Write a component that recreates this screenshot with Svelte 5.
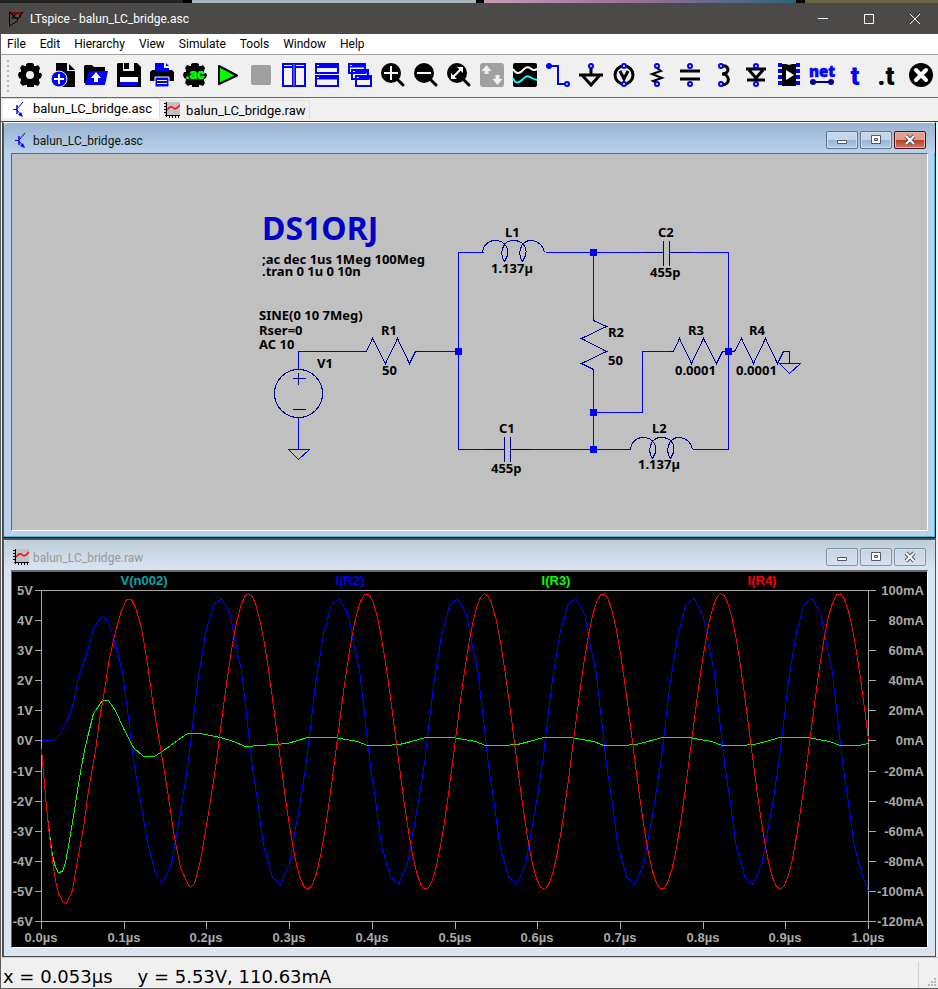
<script>
    const title = "LTspice - balun_LC_bridge.asc";
    const menus = ["File", "Edit", "Hierarchy", "View", "Simulate", "Tools", "Window", "Help"];

    const tools = [
        "Settings", "New schematic", "Open", "Save", "Print", "Configure analysis", "Run", "Stop",
        "Tile vertically", "Tile horizontally", "Cascade", "Zoom in", "Zoom out", "Zoom to fit",
        "Autorange", "Pick visible traces", "Wire", "Ground", "Voltage source", "Resistor",
        "Capacitor", "Inductor", "Diode", "Component", "Net name", "Text", "SPICE directive", "Delete",
    ];

    let activeTab = $state("asc");

    // schematic labels: x, baseline y, text
    const labels = [
        [262, 264, ";ac dec 1us 1Meg 100Meg"],
        [262, 276, ".tran 0 1u 0 10n"],
        [259, 320, "SINE(0 10 7Meg)"],
        [259, 335, "Rser=0"],
        [259, 349, "AC 10"],
        [381, 335, "R1"],
        [382, 375, "50"],
        [317, 368, "V1"],
        [505, 237, "L1"],
        [491, 273, "1.137µ"],
        [608, 337, "R2"],
        [608, 365, "50"],
        [499, 433, "C1"],
        [491, 473, "455p"],
        [658, 237, "C2"],
        [650, 277, "455p"],
        [688, 335, "R3"],
        [675, 375, "0.0001"],
        [749, 335, "R4"],
        [736, 375, "0.0001"],
        [652, 433, "L2"],
        [638, 469, "1.137µ"],
    ];
    const nodes = [[458, 351], [593, 252], [593, 412], [593, 449], [728, 351]];

    // plot area
    const left = 41;
    const right = 868;
    const top = 590;
    const bottom = 921;
    const zero = 741;
    const period = (right - left) / 7;

    const rows = Array.from({ length: 12 }, (_, i) => ({
        y: Math.round(top + ((bottom - top) * i) / 11),
        volts: `${5 - i}V`,
        amps: `${100 - i * 20}mA`,
    }));
    const cols = Array.from({ length: 11 }, (_, i) => ({
        x: Math.round(left + ((right - left) * i) / 10),
        time: `${(i / 10).toFixed(1)}µs`,
    }));
    const legend = [
        { x: 144, text: "V(n002)", color: "#00a8a8" },
        { x: 350, text: "I(R2)", color: "#0000e8" },
        { x: 556, text: "I(R3)", color: "#00ff00" },
        { x: 762, text: "I(R4)", color: "#ff0000" },
    ];

    function repeat(start, cycle, count) {
        const points = [...start];
        for (let k = 0; k < count; k++) {
            for (const [x, y] of cycle) points.push([x + k * period, y]);
        }
        return points.filter((p) => p[0] <= right);
    }

    const r2 = repeat(
        [
            [41, 740], [52, 740], [58, 736], [67, 720], [73, 702], [78, 677], [87, 650], [93, 628],
            [102, 615], [108, 622], [114, 640], [122, 672], [128, 717], [133, 760], [137, 783],
            [147, 842], [155, 873], [162, 882], [171, 863], [175, 840], [182, 800],
        ],
        [
            [188, 760], [197, 683], [205, 633], [213, 604], [221, 598], [230, 615], [235, 643],
            [241, 670], [247, 723], [252, 767], [257, 800], [263, 845], [272, 877], [280, 884],
            [289, 863], [293, 840], [300, 800],
        ],
        6
    );
    r2.push([868, 891]);

    const r3 = repeat(
        [
            [41, 749], [44, 783], [46, 807], [49, 833], [52, 855], [55, 867], [58, 872], [62, 871],
            [65, 862], [69, 840], [74, 810], [79, 777], [84, 750], [87, 737], [93, 713], [102, 700],
            [108, 700], [115, 710], [123, 728], [133, 747], [143, 756], [154, 756], [163, 750],
            [177, 740], [187, 733], [200, 733], [220, 737], [233, 741], [245, 746], [260, 745],
            [287, 743],
        ],
        [
            [307, 737], [335, 737], [345, 739], [357, 741], [367, 745], [385, 745], [399, 744], [411, 741],
        ],
        5
    );
    r3.push([868, 743]);

    const r4 = [
        [41, 749], [44, 783], [46, 807], [49, 835], [52, 860], [55, 880], [58, 893], [63, 902],
        [66, 903], [72, 890], [77, 860], [83, 827], [88, 790], [95, 750], [100, 713], [105, 684],
        [108, 663], [114, 635], [121, 610], [126, 599], [131, 599], [135, 607], [141, 627],
        [147, 663], [153, 707], [161, 753], [167, 790], [174, 837], [180, 867], [187, 883],
        [190, 887], [194, 883], [200, 860], [208, 813],
    ];
    for (let x = 216; x <= right; x += 4) {
        r4.push([x, zero - 148 * Math.cos((2 * Math.PI * (x - 248)) / period)]);
    }

    const line = (points) => points.map(([x, y]) => `${x.toFixed(1)},${y.toFixed(1)}`).join(" ");
</script>

{#snippet transistor()}
    <svg class="doc-icon" viewBox="0 0 16 16" fill="none" stroke="#00f" aria-hidden="true">
        <path d="M2 8.500h4M6 8l6-7M6 9l5 6" />
        <path d="M6 4v9" stroke-width="1.500" />
        <path d="M12 16l-5-2 3-3z" fill="#00f" stroke="none" />
    </svg>
{/snippet}

{#snippet waveform()}
    <svg class="doc-icon" viewBox="0 0 16 16" fill="none" aria-hidden="true">
        <rect x="1" width="15" height="14" fill="#c0c0c0" />
        <path d="M2.500 0v15M1 13.500h15" stroke="#000" />
        <path d="M0 1.500h2M0 4.500h2M0 7.500h2M0 10.500h2M5.500 14v2M8.500 14v2M11.500 14v2M14.500 14v2" stroke="#000" />
        <path d="M3 8l3-3h2l3 2 2-1 3-3" stroke="#f00" stroke-width="1.500" />
    </svg>
{/snippet}

{#snippet gear()}
    <path d="M10 0h4l2 1v2h2l2-1 2 3-1 3v2h2l1 2-1 3-2 1v2l1 2-2 3-3-1h-1v2H9v-2H7l-2 1-3-3 1-3v-1l-2-1-1-3 1-3h2V7L2 5l2-3 3 1h1V1z" fill="#000" />
{/snippet}

{#snippet magnifier()}
    <circle cx="10" cy="10" r="10" fill="#000" />
    <path d="M16 16l6 6" stroke="#000" stroke-width="3" stroke-linecap="round" />
{/snippet}

{#snippet pin(cx, cy)}
    <circle {cx} {cy} r="2" fill="#f0f0f0" stroke="#00f" stroke-width="2" />
{/snippet}

{#snippet toolIcon(name)}
    {#if name === "Settings"}
        {@render gear()}
        <circle cx="12" cy="12" r="4" fill="#f0f0f0" />
    {:else if name === "New schematic"}
        <path d="M5 0h11v8h8v16H5z" fill="#000" />
        <path d="M18 1l6 6h-6z" fill="#000" />
        <circle cx="8" cy="16" r="8" fill="#00f" stroke="#f0f0f0" />
        <path d="M8 11v10M3 16h10" stroke="#fff" stroke-width="2" />
    {:else if name === "Open"}
        <path d="M1 2h7l2 2h11v4H6L2 20H0V3z" fill="#000" />
        <path d="M5 8h19l-3 14H1z" fill="#00f" />
        <path d="M12 9l5 6h-3v4h-4v-4H7z" fill="#fff" />
    {:else if name === "Save"}
        <path d="M1 0h19l4 4v20H0V1z" fill="#000" />
        <path d="M6 0h11v8H6z" fill="#f0f0f0" />
        <path d="M7 0h5v6H7z" fill="#000" />
        <path d="M3 14h18v9H3z" fill="#fff" />
        <path d="M3 19h18v4H3z" fill="#00f" />
    {:else if name === "Print"}
        <path d="M5 0h9v5h5v4H5z" fill="#00f" />
        <path d="M16 0l3 3h-3z" fill="#00f" />
        <path d="M2 7h3v1h14V7h3l2 2v9H0V9z" fill="#000" />
        <path d="M5 14h14v10H5z" fill="#00f" stroke="#fff" />
        <path d="M7 17.500h10M7 20.500h10" stroke="#fff" />
    {:else if name === "Configure analysis"}
        {@render gear()}
        <text x="12" y="16" class="ac">.ac</text>
    {:else if name === "Run"}
        <path d="M3 3l18 9.500L3 21z" fill="#0f0" stroke="#000" stroke-width="2" stroke-linejoin="round" />
    {:else if name === "Stop"}
        <rect x="2" y="2" width="20" height="20" rx="2" fill="#a0a0a0" />
    {:else if name === "Tile vertically"}
        <path d="M1 1h10v22H1zM13 1h10v22H13z" fill="#f4f4f4" stroke="#00f" stroke-width="2" />
        <path d="M2 4h20" stroke="#00f" stroke-width="2" />
        <path d="M3 2.500h3M15 2.500h3" stroke="#fff" />
        <path d="M12 1v22" stroke="#a0a0a0" />
    {:else if name === "Tile horizontally"}
        <path d="M1 1h22v9H1zM1 13h22v10H1z" fill="#f4f4f4" stroke="#00f" stroke-width="2" />
        <path d="M1 3.500h22M1 15h22" stroke="#00f" stroke-width="3" />
        <path d="M2 2.500h2M2 14.500h2" stroke="#fff" />
    {:else if name === "Cascade"}
        <path d="M1 1h16v9H1zM4 7h16v9H4zM8 13h15v10H8z" fill="#f4f4f4" stroke="#00f" stroke-width="2" />
        <path d="M1 3h16M4 9h16M8 15h15" stroke="#00f" stroke-width="3" />
        <path d="M2 2.500h2M5 8.500h2M9 14.500h2" stroke="#fff" />
    {:else if name === "Zoom in"}
        {@render magnifier()}
        <path d="M10 3v14M3 10h14" stroke="#fff" stroke-width="2" />
    {:else if name === "Zoom out"}
        {@render magnifier()}
        <path d="M3 10h14" stroke="#fff" stroke-width="2" />
    {:else if name === "Zoom to fit"}
        {@render magnifier()}
        <path d="M6 14l9-9" stroke="#fff" stroke-width="2" />
        <path d="M10 4h6v6zM4 10l6 6H4z" fill="#fff" />
    {:else if name === "Autorange"}
        <rect width="24" height="24" rx="3" fill="#a0a0a0" />
        <path d="M6.500 2l5 6h-3v3h-4V8h-3zM17.500 22l5-6h-3v-4h-4v4h-3z" fill="#f0f0f0" />
    {:else if name === "Pick visible traces"}
        <rect width="24" height="24" rx="2" fill="#000" />
        <path d="M0 6c3 5 6 5 9 2s5-5 8-3 3 3 7 1" fill="none" stroke="#fff" stroke-width="2" />
        <path d="M0 15c2 6 6 5 9 2s5-5 8-3 3 2 7 3" fill="none" stroke="#0ff" stroke-width="2" />
    {:else if name === "Wire"}
        <path d="M2 3h10v18h9" fill="none" stroke="#00f" stroke-width="2" />
        <circle cx="3" cy="3" r="3" fill="#00f" />
        {@render pin(21, 21)}
    {:else if name === "Ground"}
        <path d="M12 5v7M0 12h24M3 12l9 10 9-10" fill="none" stroke="#000" stroke-width="3" />
        {@render pin(12, 3)}
    {:else if name === "Voltage source"}
        <circle cx="12" cy="12" r="9" fill="none" stroke="#000" stroke-width="3" />
        <path d="M8 8l4 8 4-8" fill="none" stroke="#000" stroke-width="3" />
        {@render pin(12, 3)}
        {@render pin(12, 21)}
    {:else if name === "Resistor"}
        <path d="M12 5l4 3-9 3 10 4-9 3 4 2" fill="none" stroke="#000" stroke-width="2" />
        {@render pin(12, 3)}
        {@render pin(12, 21)}
    {:else if name === "Capacitor"}
        <path d="M2 8h20M2 16h20" stroke="#000" stroke-width="3" />
        <path d="M12 4v3M12 17v3" stroke="#808080" />
        {@render pin(12, 3)}
        {@render pin(12, 21)}
    {:else if name === "Inductor"}
        <path d="M11 3c7-2 9 8 0 8 8 0 9 11 0 11" fill="none" stroke="#000" stroke-width="3" />
        {@render pin(10, 3)}
        {@render pin(10, 21)}
    {:else if name === "Diode"}
        <path d="M2 6h20M5 7l7 8 7-8M3 17h18" fill="none" stroke="#000" stroke-width="3" />
        {@render pin(12, 3)}
        {@render pin(12, 21)}
    {:else if name === "Component"}
        <path d="M3 0v24M21 0v24" stroke="#00f" stroke-width="4" stroke-dasharray="4 2" />
        <path d="M5 1h4l3 1 3-1h4v22H5z" fill="#000" />
        <path d="M9 7l8 5-8 5z" fill="#fff" />
    {:else if name === "Net name"}
        <text x="12" y="14" class="net">net</text>
        <path d="M3 19h18" stroke="#000090" stroke-width="2" />
        <circle cx="3" cy="19" r="3" fill="#000090" />
        <circle cx="21" cy="19" r="3" fill="#000090" />
    {:else if name === "Text"}
        <text x="12" y="22" class="tee" fill="#00f">t</text>
    {:else if name === "SPICE directive"}
        <text x="10" y="22" class="tee">.t</text>
    {:else}
        <circle cx="12" cy="12" r="12" fill="#000" />
        <path d="M7 7l10 10M17 7L7 17" stroke="#fff" stroke-width="4" stroke-linecap="round" />
    {/if}
{/snippet}

{#snippet childButtons()}
    <div class="child-buttons">
        <button type="button" aria-label="Minimize window">
            <svg viewBox="0 0 14 12"><path d="M2.500 6.500h9v3h-9z" fill="#fff" stroke="#535666" /></svg>
        </button>
        <button type="button" aria-label="Maximize window">
            <svg viewBox="0 0 14 12">
                <path d="M2.500 1.500h9v8h-9z" fill="#fff" stroke="#535666" />
                <path d="M5.500 4.500h3v2h-3z" fill="#b9d1ea" stroke="#535666" />
            </svg>
        </button>
        <button type="button" class="child-close" aria-label="Close window">
            <svg viewBox="0 0 14 12">
                <path d="M3 2l8 8M11 2l-8 8" stroke="#535666" stroke-width="4" />
                <path d="M3 2l8 8M11 2l-8 8" stroke="#fff" stroke-width="2" />
            </svg>
        </button>
    </div>
{/snippet}

<div class="desktop"></div>
<div class="app">
    <header class="titlebar">
        <svg class="logo" viewBox="0 0 16 16" aria-hidden="true">
            <path d="M1.500 0.500V15l8-5V7" fill="none" stroke="#000" />
            <path d="M2 1h6L6 7 2 3zM9 1h7l-3 2v4h-2V3H9z" fill="#8c0000" />
            <path d="M2 1l7 7M9 2L4 7h6M15 1l-5 7" fill="none" stroke="#000" />
        </svg>
        <h1>{title}</h1>
        <div class="window-buttons">
            <button type="button" aria-label="Minimize">
                <svg viewBox="0 0 10 10"><path d="M0 4.500h10" /></svg>
            </button>
            <button type="button" aria-label="Maximize">
                <svg viewBox="0 0 10 10"><path d="M0.500 0.500h9v9h-9z" /></svg>
            </button>
            <button type="button" aria-label="Close">
                <svg viewBox="0 0 10 10"><path d="M0 0l10 10M10 0L0 10" /></svg>
            </button>
        </div>
    </header>

    <nav class="menubar">
        {#each menus as menu}
            <button type="button">{menu}</button>
        {/each}
    </nav>

    <div class="toolbar">
        <span class="grip"></span>
        {#each tools as tool}
            <button type="button" aria-label={tool} disabled={tool === "Stop" || tool === "Autorange"}>
                <svg viewBox="0 0 24 24">{@render toolIcon(tool)}</svg>
            </button>
        {/each}
    </div>

    <div class="tabs">
        <button type="button" class:active={activeTab === "asc"} onclick={() => (activeTab = "asc")}>
            {@render transistor()}
            balun_LC_bridge.asc
        </button>
        <button type="button" class:active={activeTab === "raw"} onclick={() => (activeTab = "raw")}>
            {@render waveform()}
            balun_LC_bridge.raw
        </button>
    </div>

    <main class="mdi">
        <section class="child focused">
            <div class="child-title">
                {@render transistor()}
                <h2>balun_LC_bridge.asc</h2>
                {@render childButtons()}
            </div>
            <div class="client">
                <svg class="schematic" viewBox="12 154 915 376">
                    <g transform="translate(0.5 0.5)" fill="none" shape-rendering="crispEdges">
                        <path
                            class="wire"
                            d="M298 369V351H366M415 351H458M483 252H458V449H483M545 252H643M691 252H728V449H692
                               M531 449H630M593 252V315M593 375V449M593 412H642V351H667M298 417V449
                               M288 449H309L298 459ZM779 363H800L789 373Z"
                        />
                        <circle cx="298" cy="393" r="24" class="part" />
                        <path class="part" d="M292 378H305M298 372V384M292 409H305" />
                        <path class="part" d="M361 351H366L372 338L385 363L397 338L409 363L415 351H421" />
                        <path class="part" d="M593 315V320L606 326L581 338L606 351L581 363L593 369V375" />
                        <path class="part" d="M667 351H673L679 338L691 363L703 338L716 363L722 351H728" />
                        <path class="part" d="M728 351H734L741 338L753 363L765 338L777 363L783 351H789V363" />
                        <path class="part" d="M483 449H504M504 436V461M510 436V461M510 449H531" />
                        <path class="part" d="M643 252H663M663 240V265M669 240V265M669 252H691" />
                        {#each [[0, 0], [148, 197]] as [dx, dy]}
                            <path
                                class="part"
                                transform="translate({dx} {dy})"
                                d="M482 252Q484 240 495 240C504 240 509 248 507 255L504 261C499 254 501 240 513 240
                                   C523 240 527 248 525 255L522 261C517 254 519 240 531 240Q542 241 544 252"
                            />
                        {/each}
                    </g>
                    {#each nodes as [x, y]}
                        <rect x={x - 3} y={y - 3} width="7" height="7" fill="#00f" />
                    {/each}
                    <text x="262" y="240" class="callsign">DS1ORJ</text>
                    {#each labels as [x, y, text]}
                        <text {x} {y}>{text}</text>
                    {/each}
                </svg>
            </div>
        </section>

        <section class="child">
            <div class="child-title">
                {@render waveform()}
                <h2>balun_LC_bridge.raw</h2>
                {@render childButtons()}
            </div>
            <div class="client plot-client">
                <svg class="plot" viewBox="12 572 915 375">
                    {#each legend as item}
                        <text x={item.x} y="585" text-anchor="middle" fill={item.color}>{item.text}</text>
                    {/each}
                    <g transform="translate(0.5 0.5)" fill="none" shape-rendering="crispEdges">
                        <path class="axis" d="M{left} {top}H{right}V{bottom}H{left}Z" />
                        {#each rows as row}
                            <path class="axis" d="M{left - 7} {row.y}H{left}M{right} {row.y}H{right + 7}" />
                        {/each}
                        {#each cols as col}
                            <path class="axis" d="M{col.x} {bottom}V{bottom + 7}" />
                        {/each}
                        <polyline points={line(r2)} stroke="#00f" />
                        <polyline points={line(r3)} stroke="#0f0" />
                        <polyline points={line(r4)} stroke="#f00" />
                    </g>
                    {#each rows as row}
                        <text x="33" y={row.y + 5} text-anchor="end">{row.volts}</text>
                        <text x="924" y={row.y + 5} text-anchor="end">{row.amps}</text>
                    {/each}
                    {#each cols as col}
                        <text x={col.x} y="942" text-anchor="middle">{col.time}</text>
                    {/each}
                </svg>
            </div>
        </section>
    </main>

    <footer class="status">
        <span>x = 0.053µs</span>
        <span class="cursor-y">y = 5.53V, 110.63mA</span>
        <svg class="size-grip" viewBox="0 0 8 8" aria-hidden="true">
            <path d="M6 0h2v2H6zM3 3h2v2H3zM6 3h2v2H6zM0 6h2v2H0zM3 6h2v2H3zM6 6h2v2H6z" fill="#b8b8b8" />
        </svg>
    </footer>
</div>

<style>
    :global(body) {
        margin: 0;
        background: #f0f0f0;
    }

    .desktop {
        height: 3px;
        background: linear-gradient(
            90deg,
            #222 0 183px,
            #000 183px 192px,
            #a9b5bd 192px 476px,
            #000 476px 484px,
            #c79bb4 484px,
            #a0709a 630px,
            #2a6478 796px,
            #000 796px 805px,
            #6a6444 805px
        );
    }

    .app {
        box-sizing: border-box;
        font-family: Roboto, "Noto Sans", sans-serif;
        font-size: 12px;
        color: #000;
        background: #f0f0f0;
        border-bottom: 1px solid #5b5b5b;
    }

    button {
        font: inherit;
        color: inherit;
        background: none;
        border: 0;
        padding: 0;
    }

    h1,
    h2 {
        margin: 0;
        font-size: 12px;
        font-weight: 400;
    }

    svg {
        display: block;
    }

    .titlebar {
        display: flex;
        align-items: center;
        height: 31px;
        padding-left: 8px;
        background: #4b4a48;
        color: #fff;
    }

    .logo {
        width: 16px;
        height: 16px;
        margin-right: 6px;
    }

    .window-buttons {
        display: flex;
        align-self: stretch;
        margin-left: auto;
    }

    .window-buttons button {
        width: 46px;
    }

    .window-buttons svg {
        width: 10px;
        height: 10px;
        margin: 0 auto;
        fill: none;
        stroke: #fff;
    }

    .menubar {
        display: flex;
        gap: 14px;
        height: 20px;
        padding-left: 6px;
        background: #fff;
        border-bottom: 1px solid #a0a0a0;
        border-left: 1px solid #5b5b5b;
    }

    .menubar button {
        height: 19px;
    }

    .toolbar {
        display: flex;
        align-items: center;
        gap: 9px;
        height: 42px;
        padding: 0 5px 0 6px;
        border-bottom: 1px solid #696969;
        border-left: 1px solid #5b5b5b;
    }

    .toolbar button {
        flex: none;
        width: 24px;
        height: 24px;
        margin-bottom: 2px;
    }

    .toolbar svg {
        overflow: visible;
    }

    .grip {
        width: 2px;
        height: 32px;
        background: repeating-linear-gradient(#b4b4b4 0 2px, transparent 2px 5px);
    }

    .ac {
        font: 900 14px Roboto, sans-serif;
        fill: #0f0;
        stroke: #0f0;
        stroke-width: 0.5;
        text-anchor: middle;
    }

    .net {
        font: 900 15px "Noto Sans", sans-serif;
        fill: #00f;
        stroke: #00f;
        stroke-width: 0.5;
        text-anchor: middle;
    }

    .tee {
        font: 900 26px Roboto, sans-serif;
        text-anchor: middle;
    }

    .tabs {
        display: flex;
        align-items: flex-start;
        height: 23px;
        padding-left: 2px;
        border-bottom: 1px solid #404040;
        border-left: 1px solid #5b5b5b;
        font-size: 13px;
    }

    .tabs button {
        display: flex;
        align-items: center;
        gap: 6px;
        height: 19px;
        margin-top: 2px;
        padding: 0 3px 0 4px;
        border: 1px solid #dcdcdc;
        border-width: 1px 1px 0 0;
    }

    .tabs button.active {
        height: 20px;
        margin-top: 0;
        padding: 0 7px 0 8px;
        background: #fff;
    }

    .doc-icon {
        flex: none;
        width: 16px;
        height: 16px;
    }

    .mdi {
        padding-left: 1px;
        padding-right: 2px;
        border-left: 1px solid #5b5b5b;
    }

    .child {
        background: #d9e4f1;
        padding: 0 7px 8px;
        border: 1px solid #505050;
        border-width: 2px 1px 1px 2px;
    }

    .child.focused {
        background: #b9d1ea;
        padding-bottom: 6px;
        border-top: 1px solid #fff;
        border-right-color: #000;
        border-bottom-color: #000;
        box-shadow: inset -1px -1px #2cc6dc;
    }

    .child-title {
        display: flex;
        align-items: center;
        height: 30px;
        margin: 0 -7px;
        padding: 0 9px;
        color: #999;
        background: linear-gradient(#bfcddb, #d9e4f1);
        border-top-left-radius: 5px;
        border-top-right-radius: 5px;
    }

    .focused .child-title {
        color: #111;
        background: linear-gradient(#99b4d1, #b9d1ea);
    }

    .child-title h2 {
        margin: 5px 0 0 4px;
    }

    .child-title .doc-icon,
    .child-title :global(.doc-icon) {
        margin-top: 4px;
    }

    .child-buttons {
        display: flex;
        gap: 2px;
        margin: 4px 0 0 auto;
    }

    .child-buttons button {
        box-sizing: border-box;
        display: grid;
        place-items: center;
        width: 32px;
        height: 18px;
        border: 1px solid #8293a8;
        border-radius: 2px;
        box-shadow: inset 0 0 0 1px #d5e0ec;
    }

    .child-buttons svg {
        width: 14px;
        height: 12px;
    }

    .focused .child-buttons button {
        border-color: #5c7390;
        background: linear-gradient(#c3d5e8 50%, #98b3d0 50%, #b4cbe4);
    }

    .focused .child-buttons .child-close {
        border-color: #431422;
        background: linear-gradient(#e19d8e 50%, #b83a1f 50%, #d47b62);
        box-shadow: inset 0 0 0 1px #e7b3a8;
    }

    .client {
        border: 1px solid #696969;
        border-right-color: #fff;
        border-bottom-color: #fff;
        background: #c0c0c0;
    }

    .plot-client {
        border-top-width: 2px;
        background: #000;
    }

    .schematic {
        width: 100%;
        font: 700 13px "Noto Sans", sans-serif;
    }

    .schematic .callsign {
        font-size: 32px;
        fill: #0000c8;
    }

    .wire {
        stroke: #00f;
    }

    .part {
        stroke: #000090;
    }

    .plot {
        width: 100%;
        font: 700 13px "Liberation Sans", Arial, sans-serif;
        fill: #a8a8a8;
    }

    .axis {
        stroke: #a8a8a8;
    }

    .status {
        display: flex;
        height: 26px;
        padding: 4px 2px 0;
        border-top: 1px solid #c8c8c8;
        border-left: 1px solid #5b5b5b;
        font: 18px "DejaVu Sans", sans-serif;
    }

    .status span {
        line-height: 30px;
    }

    .cursor-y {
        flex: 1;
        margin-left: 25px;
        border-right: 1px solid #d0d0d0;
    }

    .size-grip {
        align-self: flex-end;
        width: 8px;
        height: 8px;
        margin: 0 0 2px 9px;
    }
</style>
